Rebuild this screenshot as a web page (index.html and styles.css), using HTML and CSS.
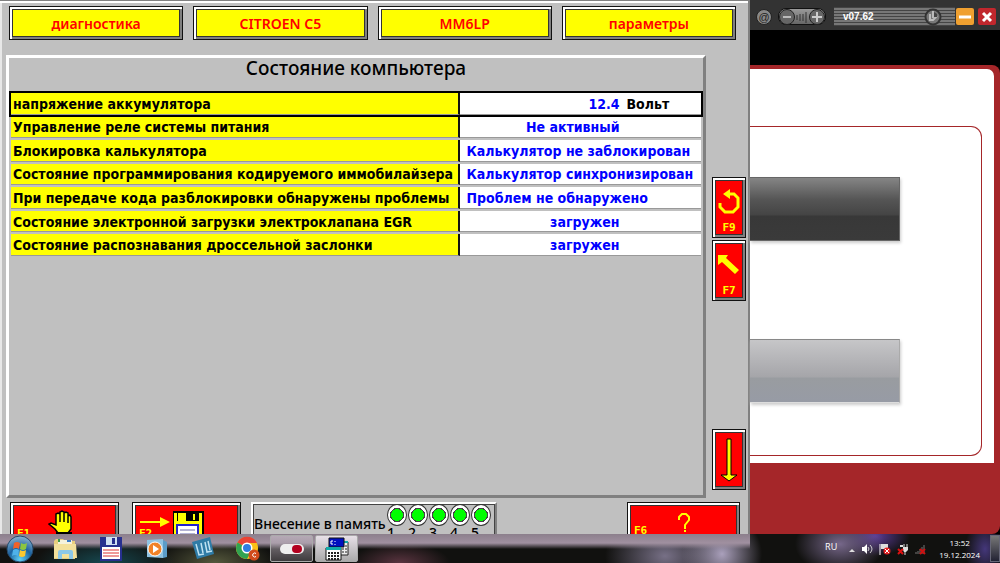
FILE: index.html
```html
<!DOCTYPE html>
<html lang="ru">
<head>
<meta charset="utf-8">
<title>Состояние компьютера</title>
<link rel="stylesheet" href="styles.css">
</head>
<body>
<div class="desktop">
  <div class="windows">
    <main class="tester">
      <nav class="tabs">
        <button class="tab">диагностика</button>
        <button class="tab">CITROEN C5</button>
        <button class="tab">MM6LP</button>
        <button class="tab">параметры</button>
      </nav>
      <div class="work">
        <section class="panel">
          <h1 class="title">Состояние компьютера</h1>
          <table class="params">
            <tbody>
              <tr class="active"><th scope="row">напряжение аккумулятора</th><td><span class="value">12.4</span><span class="unit">Вольт</span></td></tr>
              <tr><th scope="row">Управление реле системы питания</th><td><span class="value">Не активный</span></td></tr>
              <tr><th scope="row">Блокировка калькулятора</th><td>Калькулятор не заблокирован</td></tr>
              <tr><th scope="row">Состояние программирования кодируемого иммобилайзера</th><td>Калькулятор синхронизирован</td></tr>
              <tr><th scope="row">При передаче кода разблокировки обнаружены проблемы</th><td>Проблем не обнаружено</td></tr>
              <tr><th scope="row">Состояние электронной загрузки электроклапана EGR</th><td><span class="value">загружен</span></td></tr>
              <tr><th scope="row">Состояние распознавания дроссельной заслонки</th><td><span class="value">загружен</span></td></tr>
            </tbody>
          </table>
        </section>
        <aside class="side">
          <button class="key" aria-label="Сброс">
            <svg width="24" height="30" viewBox="0 0 24 30"><path d="M3 15v4l5 5h8l5-5v-9l-4-4H9" fill="none" stroke="#ff0" stroke-width="3"/><path d="M6 6l7-5v10z" fill="#ff0"/></svg>
            <span>F9</span>
          </button>
          <button class="key" aria-label="Назад">
            <svg width="24" height="30" viewBox="0 0 24 30"><path d="M1 4h10L9 7l13 12-4 4L5 11l-4 3z" fill="#ff0"/></svg>
            <span>F7</span>
          </button>
          <button class="key down" aria-label="Вниз">
            <svg width="24" height="48" viewBox="0 0 24 48"><path d="M10 3h4v36h6l-8 6-8-6h6z" fill="#ff0" stroke="#000" stroke-width="1"/></svg>
          </button>
        </aside>
      </div>
      <footer class="actions">
        <button class="action stop" aria-label="Стоп">
          <span class="fkey">F1</span>
          <svg width="28" height="28" viewBox="0 0 28 28"><path d="M10 23l-3-4-6-5 2-1 5 2V4l2-1 2 1v8V2l2-1 2 1v10V3l2-1 2 1v10V6l2-1 1 2v12l-3 4z" fill="#ff0" stroke="#000" stroke-width="1.5"/><path d="M8 22h16v6H8z" fill="#000"/></svg>
        </button>
        <button class="action save" aria-label="Сохранить">
          <span class="fkey">F2</span>
          <svg width="66" height="28" viewBox="0 0 66 28"><path d="M0 11h20V7l10 5-10 5v-4H0z" fill="#ff0"/><path d="M33 1h31v27H33z" fill="#000"/><path d="M34 3h3v25h-3zM59 3h3v25h-3zM35 11h26v3H35z" fill="#ff0"/><path d="M38 3h8v8h-8z" fill="#ff0"/><path d="M53 4h2v6h-2z" fill="#ff0"/><path d="M37 15h21v13H37z" fill="#fff" stroke="#22c" stroke-width="2"/><path d="M40 20h15M40 24h15" stroke="#66a"/></svg>
        </button>
        <div class="memory">
          <span class="memory-label">Внесение в память</span>
          <ol class="leds">
            <li>1</li><li>2</li><li>3</li><li>4</li><li>5</li>
          </ol>
        </div>
        <button class="action help" aria-label="Справка">
          <span class="fkey">F6</span>
          <svg width="14" height="24" viewBox="0 0 14 24"><path d="M2 8V5l3-3h4l3 3v3l-4 5v4" fill="none" stroke="#ff0" stroke-width="2"/><path d="M7 18h2v2H7z" fill="#ff0"/></svg>
        </button>
      </footer>
    </main>
    <section class="viewer">
      <header class="bar">
        <button class="round" aria-label="Почта">@</button>
        <div class="volume">
          <button class="round" aria-label="Тише"><svg width="12" height="12"><path d="M2 6h8" stroke="#bbb" stroke-width="2"/></svg></button>
          <svg width="12" height="12"><path d="M1 4v5M4 3v7M7 3v7M10 1v11" stroke="#333"/></svg>
          <button class="round" aria-label="Громче"><svg width="12" height="12"><path d="M1 6h10M6 1v10" stroke="#ccc" stroke-width="2"/></svg></button>
        </div>
        <div class="version"><span>v07.62</span>
          <svg width="18" height="18" viewBox="0 0 18 18"><circle cx="9" cy="9" r="7.5" fill="#777" stroke="#333" stroke-width="2"/><path d="M9 3v7M6 6v6h3l4-4" fill="none" stroke="#bbb" stroke-width="2"/><path d="M10 4l3 2v3h-3z" fill="#444"/></svg>
        </div>
        <button class="ctl min" aria-label="Свернуть"><svg width="18" height="16"><path d="M3 8h12" stroke="#fff" stroke-width="3"/></svg></button>
        <button class="ctl close" aria-label="Закрыть"><svg width="18" height="16"><path d="M5 4l8 8M13 4l-8 8" stroke="#fff" stroke-width="3"/></svg></button>
      </header>
      <div class="frame">
        <div class="sheet">
          <div class="group">
            <button class="plate dark" aria-label="Выбор 1"></button>
            <button class="plate light" aria-label="Выбор 2"></button>
          </div>
        </div>
      </div>
    </section>
  </div>
  <footer class="taskbar">
    <div class="apps">
      <button class="app start" aria-label="Пуск"><svg width="28" height="28" viewBox="0 0 28 28"><defs><radialGradient id="orb" cx=".5" cy=".9" r=".9"><stop offset="0" stop-color="#5fd0f5"/><stop offset=".5" stop-color="#1b62a0"/><stop offset="1" stop-color="#8fb5d0"/></radialGradient></defs><circle cx="14" cy="14" r="13" fill="url(#orb)" stroke="#24496b"/><path d="M8 8q3-2 6 0l-1 6q-3-2-6 0z" fill="#f0622a"/><path d="M15 8q3 2 6 0l-1 6q-3 2-6 0z" fill="#8cc63f"/><path d="M7 15q3-2 6 0l-1 6q-3-2-6 0z" fill="#4fb2ea"/><path d="M14 15q3 2 6 0l-1 6q-3 2-6 0z" fill="#fdc82f"/></svg></button>
      <button class="app" aria-label="Проводник"><svg width="26" height="24" viewBox="0 0 26 24"><path d="M2 4l2-2h7l2 2h10v18H2z" fill="#e8cf7e"/><path d="M6 3h14v4H6z" fill="#f5f2dc"/><path d="M2 7h22l1 14H2z" fill="#f3e19c"/><path d="M6 22v-7q0-2 2-2h11q2 0 2 2v7h-4v-5h-7v5z" fill="#8cc8e8"/><path d="M6 2h2v3H6z" fill="#3b9b45"/><path d="M15 3h4v2h-4z" fill="#3a7bc8"/></svg></button>
      <button class="app" aria-label="Дискета"><svg width="24" height="24" viewBox="0 0 24 24"><path d="M1 0h22v24H1z" fill="#27308f"/><path d="M7 0h11v8H7z" fill="#cfe0f2"/><path d="M13 1h3v6h-3z" fill="#27308f"/><path d="M3 10h18v12H3z" fill="#fff"/><path d="M4 13h16M4 16h16M4 19h16" stroke="#d33"/></svg></button>
      <button class="app" aria-label="Проигрыватель"><svg width="22" height="22" viewBox="0 0 22 22"><path d="M1 2l16-1v19L1 19z" fill="#8fc3e2"/><path d="M17 2l4 2v15l-4 1z" fill="#5b9cc8"/><circle cx="9" cy="11" r="7" fill="#f08228" stroke="#fff"/><path d="M7 7l6 4-6 4z" fill="#fff"/></svg></button>
      <button class="app" aria-label="Утилита"><svg width="24" height="24" viewBox="0 0 24 24"><path d="M1 5l18-5 4 17-17 5z" fill="#2e7ba6"/><path d="M5 7l3 11 5-1M10 6l2 10M14 5l2 10 5-1M17 4l2 9" fill="none" stroke="#bfe2f2" stroke-width="1.5"/></svg></button>
      <button class="app chrome" aria-label="Chrome"><svg width="26" height="26" viewBox="0 0 26 26"><circle cx="12" cy="12" r="11" fill="#fbc116"/><path d="M12 12L2.500 6.500A11 11 0 0 1 22 7H12z" fill="#ea4335"/><path d="M12 12L2.500 6.500A11 11 0 0 0 12 23l5-9z" fill="#31a352"/><circle cx="12" cy="12" r="5.500" fill="#fff"/><circle cx="12" cy="12" r="4" fill="#2f7de1"/><circle cx="19" cy="19" r="5.500" fill="#d04a1c"/><path d="M21 17.500a2 2 0 1 0 0 3" fill="none" stroke="#fff"/></svg></button>
      <button class="app open" aria-label="Запись"><svg width="24" height="12"><rect width="24" height="10" y="1" rx="5" fill="#eee"/><rect x="12" y="2" width="10" height="8" rx="4" fill="#b3001f"/></svg></button>
      <button class="app open lit" aria-label="Диагностика"><svg width="24" height="24" viewBox="0 0 24 24"><path d="M15 5h8v13h-8z" fill="#eee" stroke="#222"/><path d="M17 9h5M17 12h5M17 15h5" stroke="#222" stroke-dasharray="2 1"/><path d="M12 4h11v2H12z" fill="#1aa"/><path d="M4 1h15v9H4z" fill="#0010c0" stroke="#111"/><path d="M8 4H6v3h2M10 4v1M10 7v1" fill="none" stroke="#fff"/><path d="M1 11h15v12H1z" fill="#fff" stroke="#111"/><path d="M1 10h15v3H1z" fill="#1aa"/><path d="M3 16h11M3 19h11M3 22h11" stroke="#222" stroke-width="2" stroke-dasharray="2 1"/></svg></button>
    </div>
    <div class="tray">
      <span class="lang">RU</span>
      <svg width="6" height="12"><path d="M0 9l3-3 3 3z" fill="#ddd"/></svg>
      <svg width="12" height="12"><path d="M1 4h2l3-3v10L3 8H1z" fill="#fff"/><path d="M7 4q2 2 0 4M9 2q4 4 0 8" fill="none" stroke="#ccc"/></svg>
      <svg width="12" height="12"><path d="M1 1v11" stroke="#fff"/><path d="M2 1h7v5H2z" fill="#ddd"/><circle cx="8" cy="8" r="3.500" fill="#e02020"/><path d="M6 6l4 4M10 6l-4 4" stroke="#fff"/></svg>
      <svg width="12" height="12"><path d="M3 2h3v2H3zM6 4h5v3L9 9H7L6 7z" fill="#ddd"/><path d="M7 1v3M10 1v3M8 9v3" stroke="#ddd"/><path d="M1 6l5 5M6 6l-5 5" stroke="#d11" stroke-width="2"/></svg>
      <svg width="12" height="12"><path d="M1 11v-2M3 11V8M5 11V6M7 11V4M9 11V2" stroke="#777"/><path d="M5 6l5 5M10 6l-5 5" stroke="#c11" stroke-width="2"/></svg>
      <time class="clock"><span>13:52</span><span>19.12.2024</span></time>
      <button class="show" aria-label="Показать рабочий стол"></button>
    </div>
  </footer>
</div>
</body>
</html>
```
FILE: styles.css
```css
* { box-sizing: border-box; }
body { margin: 0; background: #000; }
button { margin: 0; padding: 0; border: 0; background: none; font: inherit; }
svg { display: block; flex: none; }

.desktop { display: flex; flex-direction: column; height: 100vh; overflow: hidden; }
.windows { display: grid; grid-template-columns: 3fr 1fr; flex: 1; min-height: 0; }

/* Diagnostic window */
.tester {
  display: flex; flex-direction: column; min-height: 0; overflow: hidden;
  padding-left: 3px;
  background: #c0c0c0;
  border-top: 1px solid #808080;
  border-right: 2px solid #808080;
  box-shadow: inset 0 2px #fff, inset 2px 0 #e8e8e8;
  font-family: "DejaVu Sans Condensed", "DejaVu Sans", sans-serif; font-size: 14px; font-weight: 700;
}
.tabs { display: grid; grid-template-columns: repeat(4, 1fr); gap: 10px; padding: 5px 12px 15px 6px; font-family: "Noto Sans", sans-serif; font-weight: 600; }
.tab, .key, .action {
  border: 1px solid #111;
  box-shadow: inset 2px 2px #fff, inset -2px -2px #808080, inset 0 0 0 3px #333;
}
.tab { height: 34px; background: #ff0; color: #f00; }
.work { display: flex; flex: 1; min-height: 0; gap: 6px; padding: 0 2px 0 3px; }
.panel {
  flex: 1; padding: 0 2px;
  border: 3px solid; border-color: #fff #808080 #808080 #fff;
}
.title { margin: 0; height: 33px; line-height: 20px; font-family: "Noto Sans", sans-serif; font-size: 19px; font-weight: 500; text-align: center; }
.params { width: 100%; height: 167px; border-collapse: separate; border-spacing: 0 2px; table-layout: fixed; line-height: 18px; }
.params th { width: 65%; padding: 1px 2px 0; background: #ff0; border-right: 2px solid #111; border-bottom: 1px solid #999; font-weight: inherit; text-align: left; white-space: nowrap; }
.params td { padding: 1px 7px 0; background: #fff; border-bottom: 1px solid #999; color: #00f; white-space: nowrap; }
.active { outline: 2px solid #000; }
.value { display: inline-block; width: 153px; text-align: right; }
.unit { padding-left: 7px; color: #000; }

.side { display: flex; flex-direction: column; gap: 2px; width: 34px; padding: 122px 0 8px; }
.key { display: flex; flex-direction: column; align-items: center; height: 61px; padding: 10px 0 4px; background: #f00; color: #ff0; font: bold 11px/12px "DejaVu Sans Mono", monospace; }
.key span { padding-top: 4px; }
.key.down { margin-top: auto; justify-content: center; padding: 0; }

.actions { display: flex; height: 36px; flex: none; align-items: flex-start; padding: 4px 8px 0 7px; overflow: hidden; }
.action { display: flex; align-items: flex-start; justify-content: center; width: 109px; height: 60px; flex: none; padding-top: 7px; position: relative; background: #f00; color: #ff0; }
.fkey { position: absolute; left: 6px; top: 24px; font: bold 11px/14px "DejaVu Sans Mono", monospace; }
.stop { padding-right: 6px; }
.save { justify-content: flex-start; margin-left: 13px; padding-left: 7px; }
.help { width: 113px; margin-left: auto; padding-top: 9px; }
.help .fkey { top: 21px; }
.memory { display: flex; width: 246px; height: 60px; margin-left: 10px; border: 2px solid; border-color: #fff #808080 #808080 #fff; box-shadow: inset 1px 1px #444, inset -1px 0 #444; font-family: "Noto Sans", sans-serif; font-weight: 500; }
.memory-label { flex: 1; padding: 10px 0 0 1px; min-width: 0; height: 34px; overflow: hidden; white-space: nowrap; line-height: 20px; }
.leds { display: flex; gap: 1px; margin: 0; padding: 0 4px 0 0; list-style: none; line-height: 14px; }
.leds li { display: flex; flex-direction: column; width: 20px; }
.leds li::before { content: ""; height: 20px; border: 1px solid #333; border-radius: 50%; background: radial-gradient(circle, #0f0 0 6px, #444 6px 7px, #fff 7px); }

/* Background application */
.viewer { display: flex; flex-direction: column; min-width: 0; background: #000; }
.bar { display: flex; align-items: center; gap: 4px; height: 30px; padding: 3px 4px 0 6px; background: #333; }
.round { display: grid; place-items: center; width: 16px; height: 16px; border: 1px solid #222; border-radius: 50%; background: #888; color: #222; font: 11px/12px "Liberation Sans", sans-serif; }
.volume { display: flex; align-items: center; justify-content: space-between; width: 48px; height: 17px; margin: 0 4px 0 2px; border: 1px solid #111; border-radius: 8px; background: linear-gradient(#999, #666); }
.volume .round { background: #666; }
.version { display: flex; flex: 1; align-items: center; justify-content: space-between; height: 19px; padding: 0 13px 0 9px; background: repeating-linear-gradient(#444 0 1px, #777 1px 3px); color: #fff; font: bold 10px/14px "Liberation Sans", sans-serif; }
.ctl { display: grid; place-items: center; width: 18px; height: 17px; border-radius: 2px; }
.min { margin-left: -3px; background: #f0a030; }
.close { background: #c1272d; }
.frame { flex: 1; min-height: 0; margin-top: 35px; padding: 4px 6px 71px 0; background: #a52629; border-radius: 0 8px 8px 0; }
.sheet { height: 100%; padding: 57px 12px 7px 0; background: #fff; border-radius: 0 7px 0 0; }
.group { display: flex; flex-direction: column; gap: 98px; height: 100%; padding-top: 50px; border: solid #a52629; border-width: 1px 1px 1px 0; border-radius: 0 11px 11px 0; }
.plate { width: 65%; height: 64px; border: 1px solid #666; border-left: 0; box-shadow: 1px 2px 3px #ccc; }
.dark { background: linear-gradient(#858585, #555 35%, #444 60%, #383838 61%, #3a3a3a); }
.light { background: linear-gradient(#c6c6c8, #a5a5a9 60%, #999ca0 61%, #979ba5); border-color: #888 #aaa #ddd; }

/* Taskbar */
.taskbar {
  display: flex; justify-content: space-between; height: 29px; flex: none;
  background:
    linear-gradient(#8c7f8c, #a090a0 9px, #0000 15px) 0 0 / 75% 100% no-repeat,
    radial-gradient(70px 26px at 105px 29px, #164850, #0000),
    radial-gradient(60px 26px at 215px 29px, #55583c, #0000),
    radial-gradient(50px 20px at 400px 29px, #5a3440, #0000),
    radial-gradient(40px 40px at 722px 20px, #aaa0bc, #0000),
    radial-gradient(60px 40px at 665px 22px, #777086, #0000),
    radial-gradient(45px 30px at 840px 10px, #76678a, #0000),
    radial-gradient(35px 20px at 875px 2px, #5b3b98, #0000),
    radial-gradient(20px 30px at 985px 15px, #44377a, #0000),
    #11110f;
}
.apps, .tray { display: flex; align-items: center; }
.apps { padding-left: 6px; }
.app { display: grid; place-items: center; width: 46px; height: 29px; }
.start { width: 28px; margin-right: 8px; }
.chrome { width: 44px; }
.open { width: 43px; height: 27px; margin-right: 2px; border: 1px solid #aaa; border-radius: 2px; background: linear-gradient(#c8bcc8aa, #66606688); }
.open.lit { background: linear-gradient(#e8e0e8, #aaa); }
.tray { gap: 6px; color: #fff; font: 8px/12px "Open Sans", sans-serif; }
.lang { padding: 0 6px 4px 0; font-size: 9px; }
.clock { display: flex; flex-direction: column; align-items: center; margin-left: 6px; }
.show { width: 10px; height: 27px; margin-left: 4px; border: 1px solid #667; background: linear-gradient(#777, #223); }
```
